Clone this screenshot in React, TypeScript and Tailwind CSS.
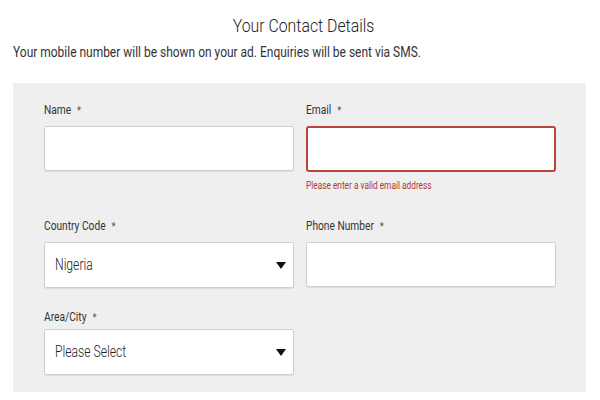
import React from 'react'

const Caret = () => (
  <svg width="10" height="7" viewBox="0 0 10 7" className="shrink-0">
    <path d="M0 0 H10 L5 7 Z" fill="#111" />
  </svg>
)

const Label = ({ text }: { text: string }) => (
  <div className="h-4 text-[12px] leading-4 text-[#333]">
    <span className="inline-block origin-left scale-x-[0.85] whitespace-nowrap">
      {text} <span className="ml-1 text-[11px] text-[#555]">*</span>
    </span>
  </div>
)

const TextBox = ({ error }: { error?: boolean }) => (
  <div
    className={
      error
        ? 'h-[46px] rounded-[3px] border-2 border-[#b8443c] bg-white'
        : 'h-[45px] rounded-[2px] border border-[#cfcfcf] bg-white shadow-[0_1px_1px_rgba(0,0,0,0.08)]'
    }
  />
)

const SelectBox = ({ value }: { value: string }) => (
  <div className="h-[46px] rounded-[2px] border border-[#cfcfcf] bg-white shadow-[0_1px_1px_rgba(0,0,0,0.08)] flex items-center justify-between pl-[10px] pr-[7px]">
    <span className="inline-block origin-left scale-x-[0.76] whitespace-nowrap text-[16px] font-light text-[#222]">
      {value}
    </span>
    <Caret />
  </div>
)

export default function App() {
  return (
    <div className="w-[600px] h-[400px] bg-white font-['Roboto',sans-serif] overflow-hidden">
      <div className="pt-[15px] flex justify-center pl-[6px]">
        <h1 className="inline-block scale-x-[0.88] whitespace-nowrap text-[18px] leading-[22px] font-light text-[#222]">
          Your Contact Details
        </h1>
      </div>
      <div className="mt-[3px] pl-[13px] h-5">
        <p className="inline-block origin-left scale-x-[0.855] whitespace-nowrap text-[14px] leading-[20px] text-[#333]">
          Your mobile number will be shown on your ad. Enquiries will be sent via SMS.
        </p>
      </div>

      <div className="mt-[23px] ml-[13px] w-[573px] bg-[#efefef] pt-[19px] pb-[17px] pl-[31px] pr-[30px]">
        <div className="grid grid-cols-2 gap-x-3">
          <div>
            <Label text="Name" />
            <div className="mt-2">
              <TextBox />
            </div>
          </div>
          <div>
            <Label text="Email" />
            <div className="mt-2">
              <TextBox error />
            </div>
            <div className="mt-[8px] h-3 text-[10px] leading-3 text-[#b03a30]">
              <span className="inline-block origin-left scale-x-[0.83] whitespace-nowrap">
                Please enter a valid email address
              </span>
            </div>
          </div>
        </div>

        <div className="mt-[26px] grid grid-cols-2 gap-x-3">
          <div>
            <Label text="Country Code" />
            <div className="mt-2">
              <SelectBox value="Nigeria" />
            </div>
          </div>
          <div>
            <Label text="Phone Number" />
            <div className="mt-2">
              <TextBox />
            </div>
          </div>
        </div>

        <div className="mt-[21px] grid grid-cols-2 gap-x-3">
          <div>
            <Label text="Area/City" />
            <div className="mt-[4px]">
              <SelectBox value="Please Select" />
            </div>
          </div>
        </div>
      </div>
    </div>
  )
}
